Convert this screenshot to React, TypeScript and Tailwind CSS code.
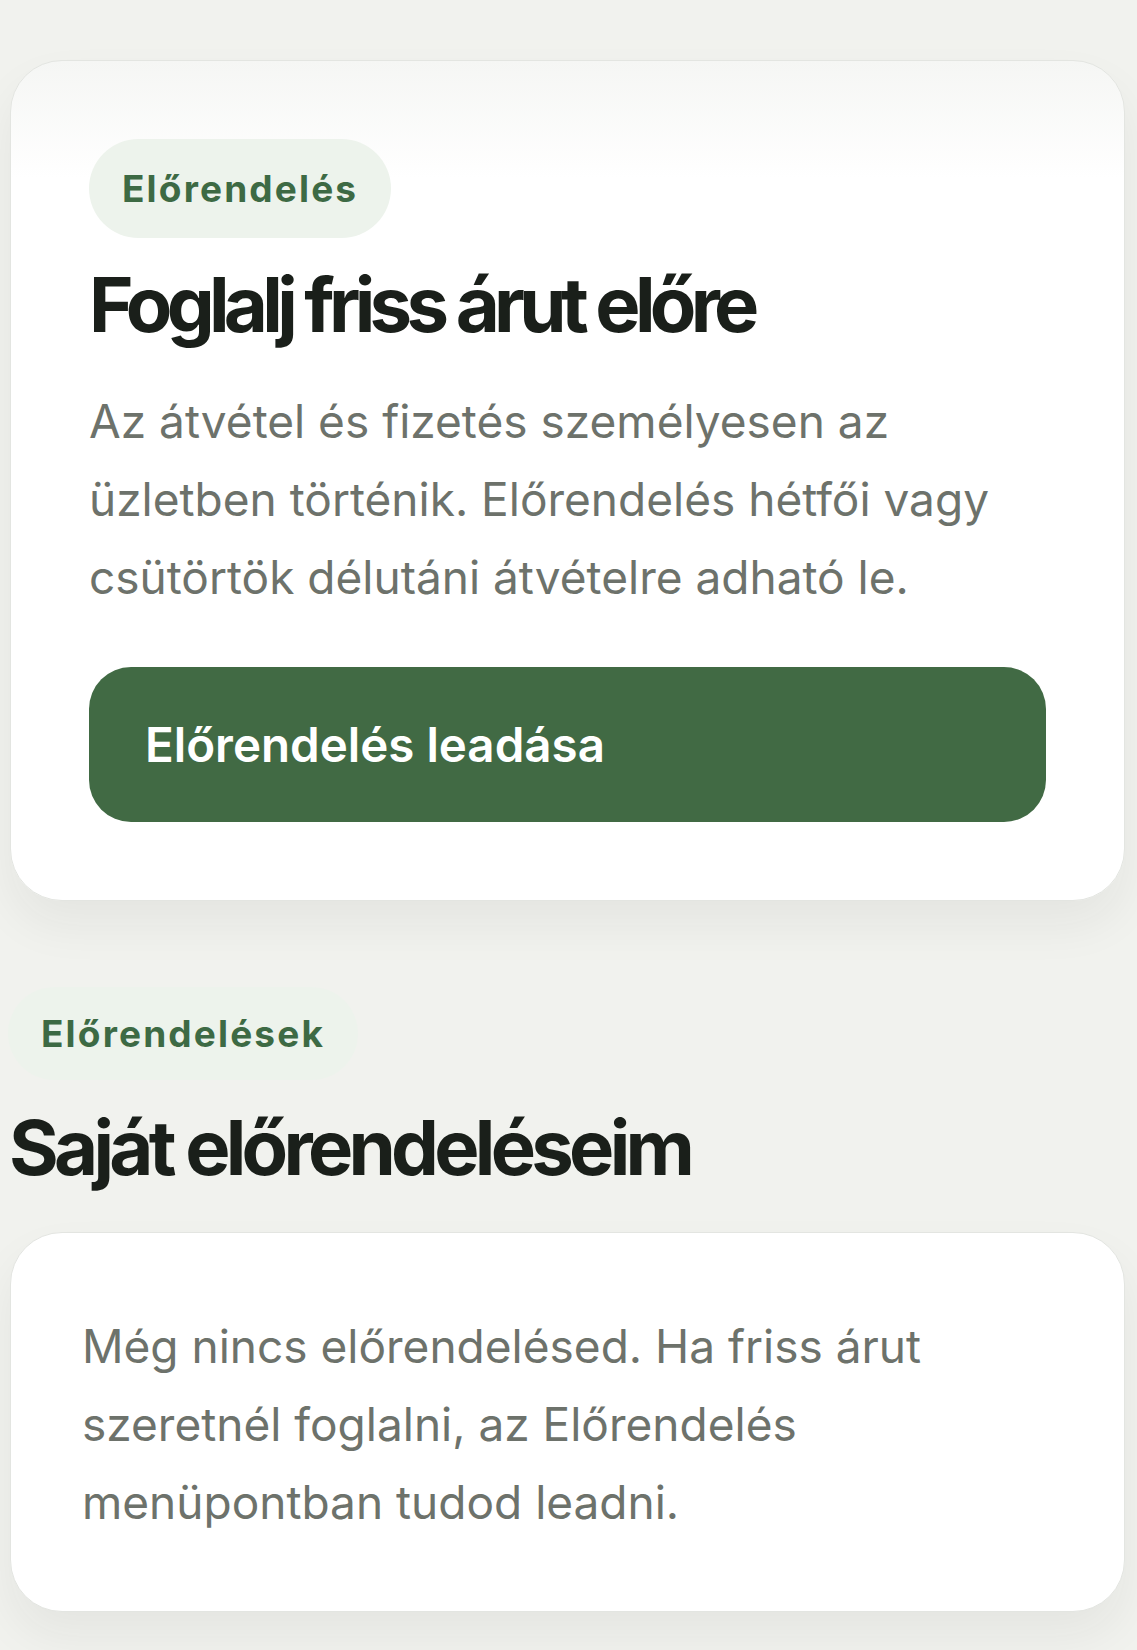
const FONT = { fontFamily: 'Inter, "Noto Sans", "Liberation Sans", sans-serif' }

function Badge({ children, tall }: { children: string; tall?: boolean }) {
  return (
    <span
      className={`inline-flex items-center rounded-full bg-[#edf3ec] px-[33px] text-[37px] font-bold tracking-[0.058em] text-[#3d6a44] ${
        tall ? 'h-[99px]' : 'h-[93px]'
      }`}
    >
      {children}
    </span>
  )
}

export default function App() {
  return (
    <div className="min-h-screen bg-[#f1f2ee] pl-[10px] pr-[12px] pt-[60px] pb-[40px]" style={FONT}>
      <section className="rounded-[52px] border border-[#e3e5e1] bg-[linear-gradient(to_bottom,#f5f6f4,#ffffff_14%)] p-[78px] shadow-[0_24px_48px_rgba(30,40,30,0.06)]">
        <Badge tall>Előrendelés</Badge>
        <h1 className="mt-[28px] text-[76px] font-bold leading-none tracking-[-0.075em] text-[#1a1f1a]">
          Foglalj friss árut előre
        </h1>
        <p className="mt-[40px] text-[46px] leading-[78px] text-[#6d726b]">
          Az átvétel és fizetés személyesen az üzletben történik. Előrendelés hétfői vagy csütörtök délutáni átvételre adható le.
        </p>
        <button className="mt-[51px] flex h-[155px] w-full items-center rounded-[42px] bg-[#416a44] px-[56px] text-left text-[47.5px] font-semibold text-white">
          Előrendelés leadása
        </button>
      </section>

      <section className="mt-[86px]">
        <div className="-ml-[2px]">
          <Badge>Előrendelések</Badge>
        </div>
        <h2 className="mt-[29px] -ml-[1px] text-[76px] font-bold leading-none tracking-[-0.062em] text-[#1a1f1a]">
          Saját előrendeléseim
        </h2>
        <div className="mt-[47px] rounded-[52px] border border-[#e3e5e1] bg-white px-[71px] pt-[74px] pb-[70px] shadow-[0_24px_48px_rgba(30,40,30,0.06)]">
          <p className="max-w-[900px] text-[46px] leading-[78px] text-[#6d726b]">
            Még nincs előrendelésed. Ha friss árut szeretnél foglalni, az Előrendelés menüpontban tudod leadni.
          </p>
        </div>
      </section>
    </div>
  )
}
